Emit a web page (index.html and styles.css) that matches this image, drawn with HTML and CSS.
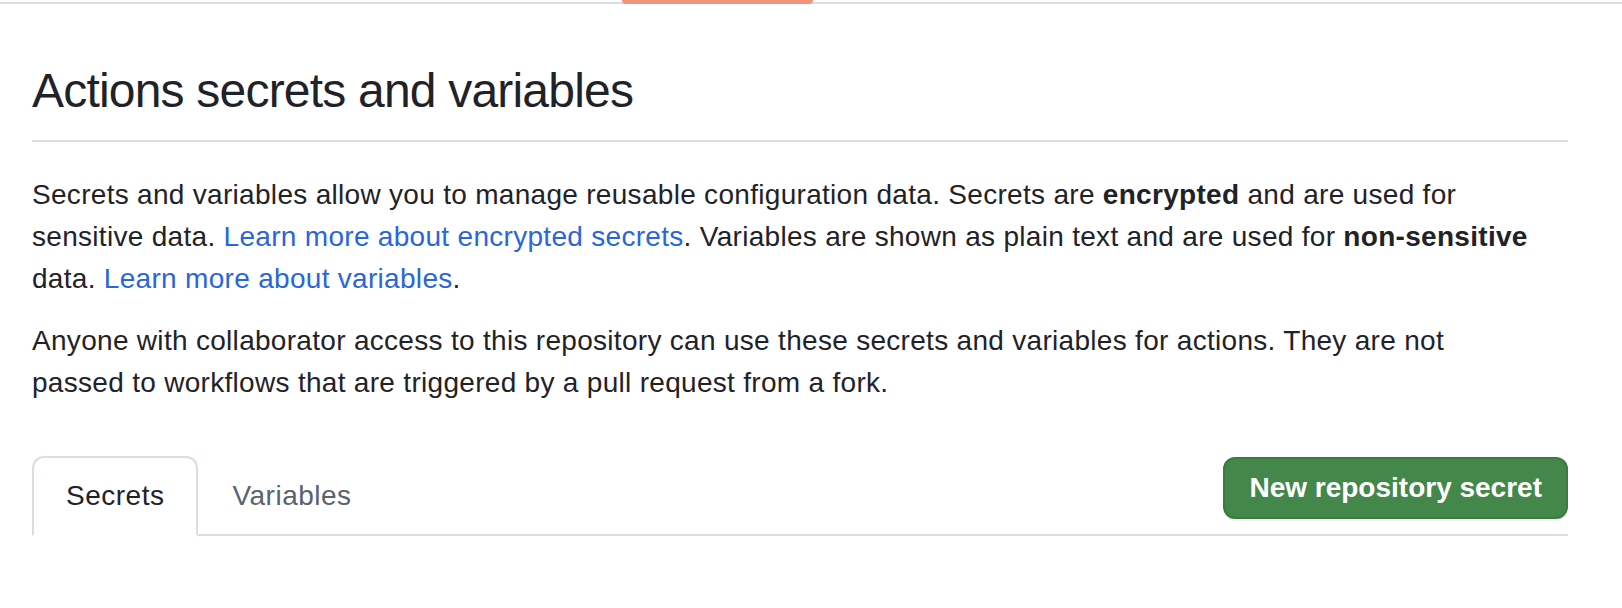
FILE: index.html
```html
<!DOCTYPE html>
<html lang="en">
<head>
<meta charset="utf-8">
<title>Actions secrets and variables</title>
<link rel="stylesheet" href="styles.css">
</head>
<body>
  <div class="topnav">
    <div class="topnav-selected"></div>
  </div>
  <main class="page">
    <div class="subhead">
      <h2 class="subhead-heading">Actions secrets and variables</h2>
    </div>
    <p class="desc">Secrets and variables allow you to manage reusable configuration data. Secrets are <strong>encrypted</strong> and are used for <span class="nowrap">sensitive data.</span> <a href="#" class="link">Learn more about encrypted secrets</a>. Variables are shown as plain text and are used for <strong>non-sensitive</strong> <span class="nowrap">data. <a href="#" class="link">Learn</a></span> <a href="#" class="link">more about variables</a>.</p>
    <p class="desc">Anyone with collaborator access to this repository can use these secrets and variables for actions. They are not <span class="nowrap">passed to workflows</span> that are triggered by a pull request from a fork.</p>
    <div class="tabbar">
      <nav class="tabnav">
        <a href="#" class="tab tab-selected">Secrets</a>
        <a href="#" class="tab">Variables</a>
      </nav>
      <button class="btn-primary" type="button">New repository secret</button>
    </div>
  </main>
</body>
</html>
```
FILE: styles.css
```css
* { box-sizing: border-box; }

html, body {
  margin: 0;
  padding: 0;
  background: #ffffff;
}

body {
  font-family: "Liberation Sans", Arial, Helvetica, sans-serif;
  color: #1f2328;
  font-size: 28px;
  line-height: 42px;
}

.topnav {
  height: 2px;
  margin-top: 2px;
  background: #d8dee4;
  display: flex;
}

.topnav-selected {
  margin-left: 622px;
  margin-top: -2px;
  width: 191px;
  height: 4px;
  background: #f2947a;
  border-radius: 0 0 4px 4px;
}

.page {
  width: 1536px;
  margin-left: 32px;
}

.subhead {
  margin-top: 51px;
  padding-bottom: 13px;
  border-bottom: 2px solid #d8dee4;
  margin-bottom: 32px;
}

.subhead-heading {
  margin: 0;
  font-size: 48px;
  line-height: 72px;
  font-weight: 400;
  letter-spacing: -0.8px;
  color: #1f2328;
}

.desc {
  margin: 0 0 20px 0;
  letter-spacing: 0.3px;
}

.desc strong {
  font-weight: 700;
}

.nowrap {
  white-space: nowrap;
}

.link {
  color: #2a66d9;
  text-decoration: none;
}

.tabbar {
  margin-top: 52px;
  display: flex;
  align-items: flex-start;
  justify-content: space-between;
  border-bottom: 2px solid #d8dee4;
}

.tabnav {
  display: flex;
  margin-bottom: -2px;
}

.tab {
  display: block;
  padding: 17px 32px 17px;
  line-height: 42px;
  letter-spacing: 0.5px;
  color: #59636e;
  text-decoration: none;
  border: 2px solid transparent;
  border-bottom: 0;
  border-radius: 12px 12px 0 0;
}

.tab-selected {
  color: #1f2328;
  border-color: #d8dee4;
  background: #ffffff;
  border-bottom: 2px solid #ffffff;
}

.btn-primary {
  margin-top: 1px;
  height: 62px;
  padding: 0 24px;
  font-family: "Liberation Sans", Arial, Helvetica, sans-serif;
  font-size: 28px;
  font-weight: 700;
  color: #ffffff;
  background: #43874a;
  border: 2px solid #3b7a41;
  border-radius: 12px;
  box-shadow: 0 2px 0 rgba(31, 35, 40, 0.06);
}
```
